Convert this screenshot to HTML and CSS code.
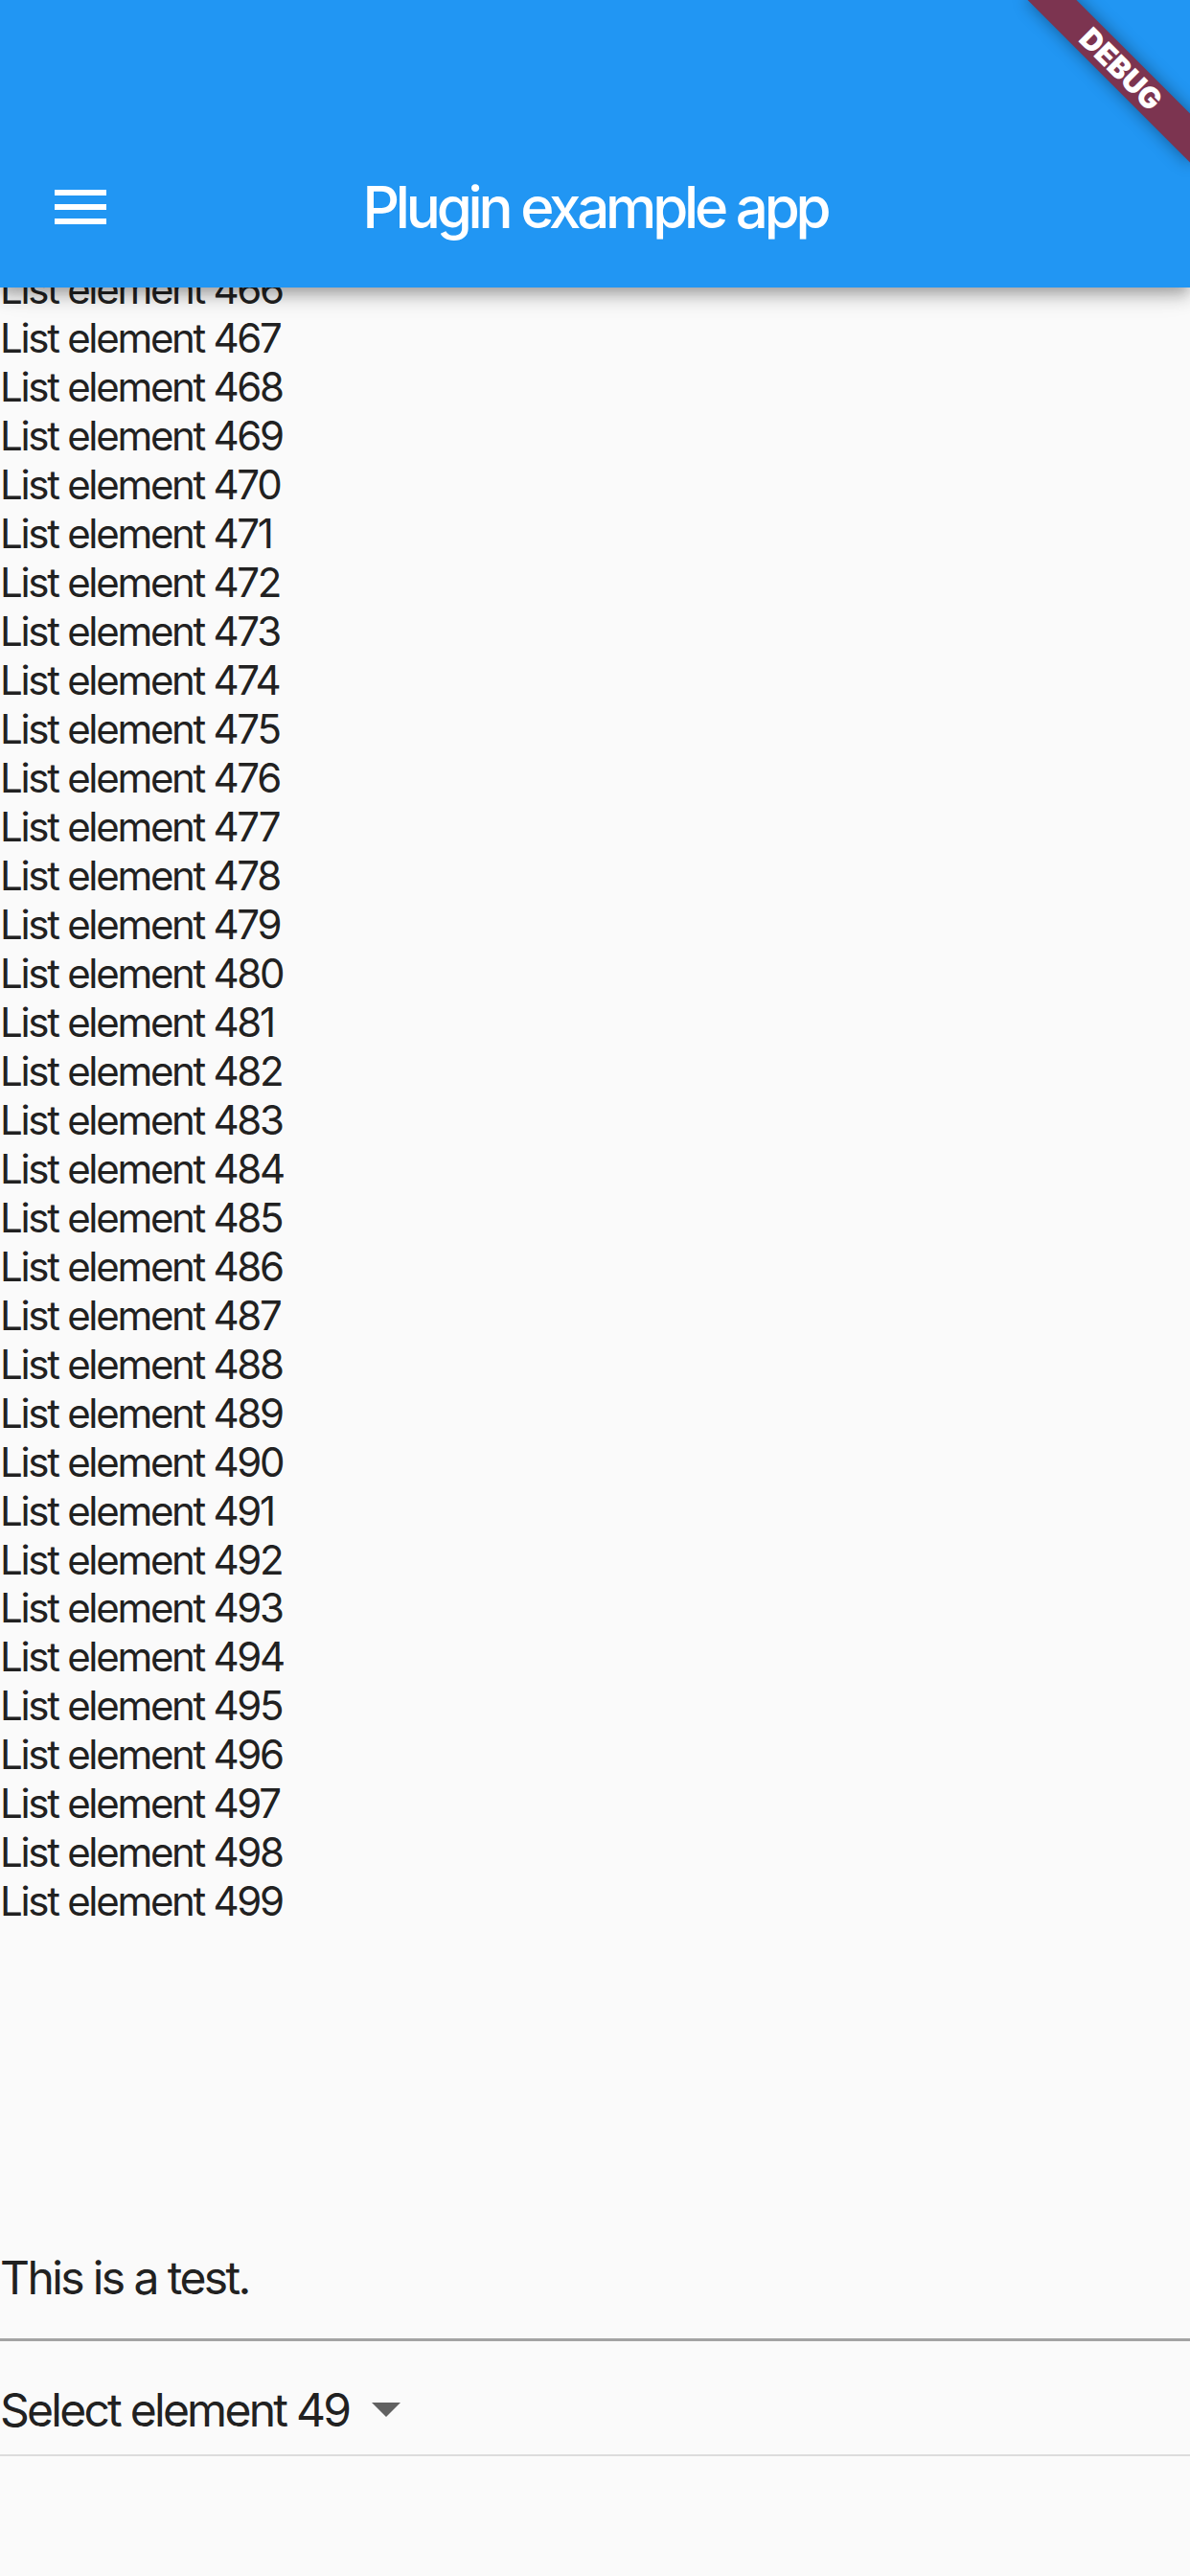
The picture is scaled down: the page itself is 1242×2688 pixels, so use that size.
FILE: index.html
```
<!DOCTYPE html>
<html lang="en">
<head>
<meta charset="utf-8">
<title>Plugin example app</title>
<link rel="stylesheet" href="styles.css">
</head>
<body>
<div class="screen">
  <header class="appbar">
    <div class="toolbar">
      <button class="menu-btn" aria-label="Open navigation menu">
        <svg class="menu-icon" viewBox="0 0 24 24" width="72" height="72"><path d="M3 18h18v-2H3v2zm0-5h18v-2H3v2zm0-7v2h18V6H3z" fill="#ffffff"/></svg>
      </button>
      <h1 class="title">Plugin example app</h1>
    </div>
  </header>
  <main class="content">
    <div class="list">
      <div class="list-inner">
        <div class="row">List element 466</div>
        <div class="row">List element 467</div>
        <div class="row">List element 468</div>
        <div class="row">List element 469</div>
        <div class="row">List element 470</div>
        <div class="row">List element 471</div>
        <div class="row">List element 472</div>
        <div class="row">List element 473</div>
        <div class="row">List element 474</div>
        <div class="row">List element 475</div>
        <div class="row">List element 476</div>
        <div class="row">List element 477</div>
        <div class="row">List element 478</div>
        <div class="row">List element 479</div>
        <div class="row">List element 480</div>
        <div class="row">List element 481</div>
        <div class="row">List element 482</div>
        <div class="row">List element 483</div>
        <div class="row">List element 484</div>
        <div class="row">List element 485</div>
        <div class="row">List element 486</div>
        <div class="row">List element 487</div>
        <div class="row">List element 488</div>
        <div class="row">List element 489</div>
        <div class="row">List element 490</div>
        <div class="row">List element 491</div>
        <div class="row">List element 492</div>
        <div class="row">List element 493</div>
        <div class="row">List element 494</div>
        <div class="row">List element 495</div>
        <div class="row">List element 496</div>
        <div class="row">List element 497</div>
        <div class="row">List element 498</div>
        <div class="row">List element 499</div>
      </div>
    </div>
    <div class="test-text">This is a test.</div>
    <div class="dropdown">
      <span class="dropdown-label">Select element 49</span>
      <svg class="dropdown-arrow" viewBox="0 0 30 15" width="30" height="15"><path d="M0 0h30L15 15z" fill="#616161"/></svg>
    </div>
  </main>
  <div class="debug-banner"><span>DEBUG</span></div>
</div>
</body>
</html>
```

FILE: styles.css
```
html, body {
  margin: 0;
  padding: 0;
}
body {
  background: #fafafa;
  font-family: "Inter", "Liberation Sans", sans-serif;
  color: #212121;
}
.screen {
  position: relative;
  width: 1242px;
  height: 2688px;
  overflow: hidden;
  background: #fafafa;
}
.appbar {
  position: relative;
  z-index: 2;
  height: 300px;
  box-sizing: border-box;
  padding-top: 132px;
  background: #2196f3;
  box-shadow: 0 6px 12px -3px rgba(0,0,0,0.2), 0 12px 15px 0 rgba(0,0,0,0.14), 0 3px 30px 0 rgba(0,0,0,0.12);
}
.toolbar {
  position: relative;
  height: 168px;
  display: flex;
  align-items: center;
}
.menu-btn {
  margin: 0 0 0 48px;
  padding: 0;
  border: 0;
  background: none;
  width: 72px;
  height: 72px;
  display: flex;
}
.menu-icon {
  display: block;
}
.title {
  flex: 1;
  margin: 0 0 0 -120px;
  text-align: center;
  color: #ffffff;
  font-size: 60px;
  font-weight: 500;
  line-height: 72px;
  letter-spacing: -4.2px;
}
.content {
  display: flex;
  flex-direction: column;
}
.list {
  position: relative;
  z-index: 1;
  height: 1710px;
  overflow: hidden;
}
.list-inner {
  margin-top: -22.7px;
}
.row {
  height: 50.97px;
  font-size: 42px;
  line-height: 50.97px;
  letter-spacing: -2.3px;
  white-space: nowrap;
}
.test-text {
  margin-top: 338px;
  height: 57px;
  font-size: 48px;
  line-height: 57px;
  letter-spacing: -2.6px;
  padding-bottom: 35px;
  border-bottom: 3px solid #a3a3a3;
}
.dropdown {
  display: flex;
  align-items: center;
  margin-top: 42.7px;
  padding-bottom: 18px;
  border-bottom: 2px solid #dcdcdc;
}
.dropdown-label {
  font-size: 48px;
  line-height: 57px;
  letter-spacing: -2.75px;
}
.dropdown-arrow {
  margin-left: 24px;
  margin-top: 1px;
}
.debug-banner {
  position: absolute;
  z-index: 5;
  left: 1050px;
  top: 54px;
  width: 240px;
  height: 36px;
  transform: rotate(45deg);
  background: #7c3450;
  box-shadow: 0 0 18px rgba(0,0,0,0.4);
  display: flex;
  align-items: center;
  justify-content: center;
}
.debug-banner span {
  color: #ffffff;
  font-size: 30.6px;
  font-weight: 900;
  line-height: 36px;
  letter-spacing: 0;
}
```
